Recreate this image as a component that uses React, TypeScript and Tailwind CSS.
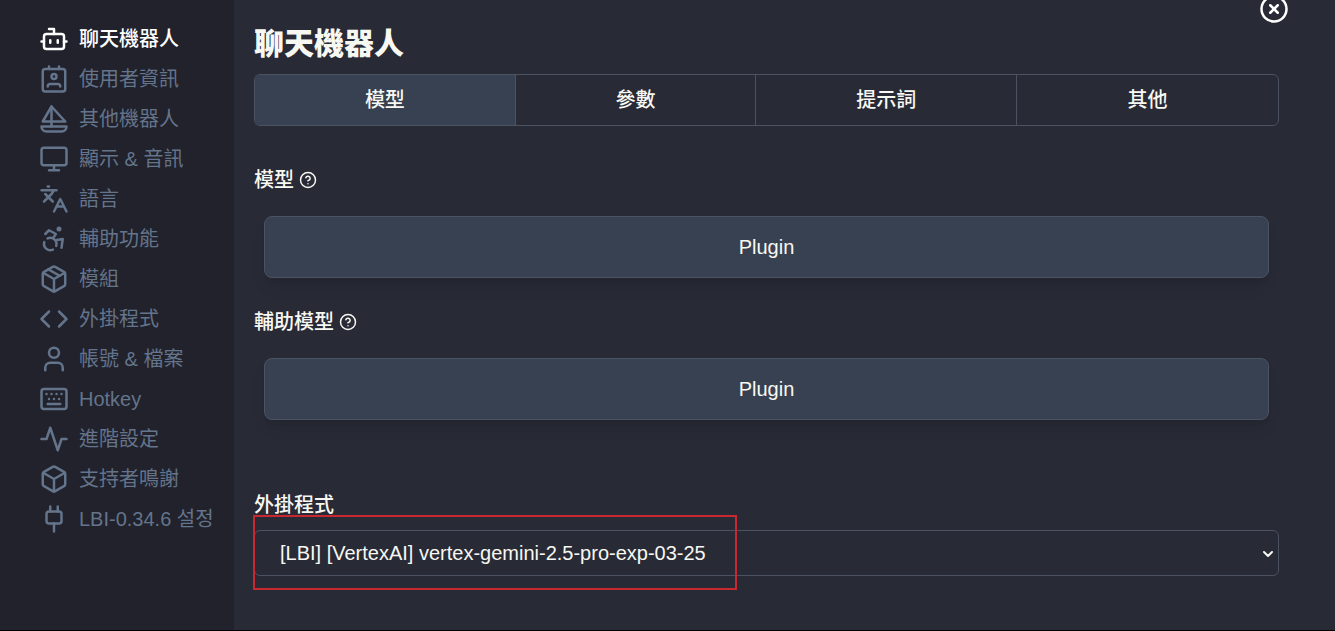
import { useState } from 'react'
import type { ReactNode } from 'react'
import { ChevronDown, CircleHelp, CircleX } from 'lucide-react'

const menu: { label: string; icon: ReactNode }[] = [
  { label: '聊天機器人', icon: <><path d="M12 8V4H8" /><rect width="16" height="12" x="4" y="8" rx="2" /><path d="M2 14h2M20 14h2M15 13v2M9 13v2" /></> },
  { label: '使用者資訊', icon: <><path d="M17 18a2 2 0 0 0-2-2H9a2 2 0 0 0-2 2" /><rect width="18" height="18" x="3" y="4" rx="2" /><circle cx="12" cy="10" r="2" /><path d="M8 2v2M16 2v2" /></> },
  { label: '其他機器人', icon: <><path d="M22 18H2a4 4 0 0 0 4 4h12a4 4 0 0 0 4-4Z" /><path d="M21 14 10 2 3 14h18Z" /><path d="M10 2v16" /></> },
  { label: '顯示 & 音訊', icon: <><rect width="20" height="14" x="2" y="3" rx="2" /><path d="M8 21h8M12 17v4" /></> },
  { label: '語言', icon: <path d="m5 8 6 6M4 14l6-6 2-3M2 5h12M7 2h1M22 22l-5-10-5 10M14 18h6" /> },
  { label: '輔助功能', icon: <><circle cx="16" cy="4" r="1" /><path d="m18 19 1-7-6 1M5 8l3-3 5.5 3-2.36 3.5M4.24 14.5a5 5 0 0 0 6.88 6M13.76 17.5a5 5 0 0 0-6.88-6" /></> },
  { label: '模組', icon: <><path d="m7.5 4.27 9 5.15" /><path d="M21 8a2 2 0 0 0-1-1.73l-7-4a2 2 0 0 0-2 0l-7 4A2 2 0 0 0 3 8v8a2 2 0 0 0 1 1.73l7 4a2 2 0 0 0 2 0l7-4A2 2 0 0 0 21 16Z" /><path d="m3.3 7 8.7 5 8.7-5M12 22V12" /></> },
  { label: '外掛程式', icon: <path d="m16 18 6-6-6-6M8 6l-6 6 6 6" /> },
  { label: '帳號 & 檔案', icon: <><path d="M19 21v-2a4 4 0 0 0-4-4H9a4 4 0 0 0-4 4v2" /><circle cx="12" cy="7" r="4" /></> },
  { label: 'Hotkey', icon: <><rect width="20" height="16" x="2" y="4" rx="2" /><path d="M6 8h.001M10 8h.001M14 8h.001M18 8h.001M8 12h.001M12 12h.001M16 12h.001M7 16h10" /></> },
  { label: '進階設定', icon: <path d="M22 12h-4l-3 9L9 3l-3 9H2" /> },
  { label: '支持者鳴謝', icon: <><path d="M21 8a2 2 0 0 0-1-1.73l-7-4a2 2 0 0 0-2 0l-7 4A2 2 0 0 0 3 8v8a2 2 0 0 0 1 1.73l7 4a2 2 0 0 0 2 0l7-4A2 2 0 0 0 21 16Z" /><path d="m3.3 7 8.7 5 8.7-5M12 22V12" /></> },
  { label: 'LBI-0.34.6 설정', icon: <><path d="M9 2v4M15 2v4M12 15.5V22" /><rect width="12" height="9.5" x="6" y="6" rx="2" /></> },
]

const tabs = ['模型', '參數', '提示詞', '其他']

function ModelField({ label }: { label: string }) {
  return (
    <div>
      <div className="flex items-center gap-[5px] text-xl leading-7 font-medium">
        <span>{label}</span>
        <button type="button" aria-label={`${label} help`}><CircleHelp className="size-4.5" /></button>
      </div>
      <div className="flex p-2.5 pt-5.5">
        <button type="button" className="h-15.5 flex-1 rounded-lg border border-[#4b5362] bg-[#384151] text-xl shadow-lg">Plugin</button>
      </div>
    </div>
  )
}

export default function App() {
  const [active, setActive] = useState(0)
  const [tab, setTab] = useState(0)

  return (
    <div className="flex min-h-screen border-b border-black bg-[#282a36] font-['Liberation_Sans','Noto_Sans_CJK_TC','Noto_Sans_CJK_KR',sans-serif] text-[#f8f8f2]">
      <nav className="flex w-[234px] shrink-0 flex-col gap-2.5 bg-[#21222c] pt-6 pl-[39px]">
        {menu.map((m, i) => (
          <button key={m.label} type="button" onClick={() => setActive(i)}
            className={`flex h-7.5 items-center gap-2.5 text-xl whitespace-nowrap ${i === active ? 'font-medium text-white' : 'text-[#64748b]'}`}>
            <svg viewBox="0 0 24 24" className="size-7.5 shrink-0" fill="none" stroke="currentColor" strokeWidth="2" strokeLinecap="round" strokeLinejoin="round">{m.icon}</svg>
            <span>{m.label}</span>
          </button>
        ))}
      </nav>

      <main className="relative min-w-0 flex-1 pt-6.5 pr-14 pl-5">
        <button type="button" aria-label="Close" className="absolute -top-1.5 right-[46px] text-white">
          <CircleX className="size-7.5" />
        </button>
        <h1 className="mb-3 text-3xl font-black">聊天機器人</h1>

        <div className="grid grid-cols-[13fr_12fr_13fr_13fr] overflow-hidden rounded-md border border-[#4b5362]">
          {tabs.map((t, i) => (
            <button key={t} type="button" onClick={() => setTab(i)}
              className={`h-12.5 px-4 text-xl font-medium ${i < tabs.length - 1 ? 'border-r border-[#4b5362]' : ''} ${i === tab ? 'bg-[#384151]' : ''}`}>
              {t}
            </button>
          ))}
        </div>

        <div className="mt-10 flex flex-col gap-5">
          <ModelField label="模型" />
          <ModelField label="輔助模型" />
        </div>

        <div className="relative mt-15">
          <label htmlFor="plugin" className="block pt-px text-xl leading-7 font-medium">外掛程式</label>
          <div className="relative mt-[11px]">
            <select id="plugin" className="h-11.5 w-full appearance-none rounded-md border border-[#4b5362] px-[25px] text-xl">
              <option>[LBI] [VertexAI] vertex-gemini-2.5-pro-exp-03-25</option>
            </select>
            <ChevronDown className="pointer-events-none absolute top-4 right-[3px] size-4" strokeWidth={3} />
          </div>
          <div className="pointer-events-none absolute top-[25px] -left-px h-[75px] w-[484px] border-2 border-[#c8282f]" />
        </div>
      </main>
    </div>
  )
}
